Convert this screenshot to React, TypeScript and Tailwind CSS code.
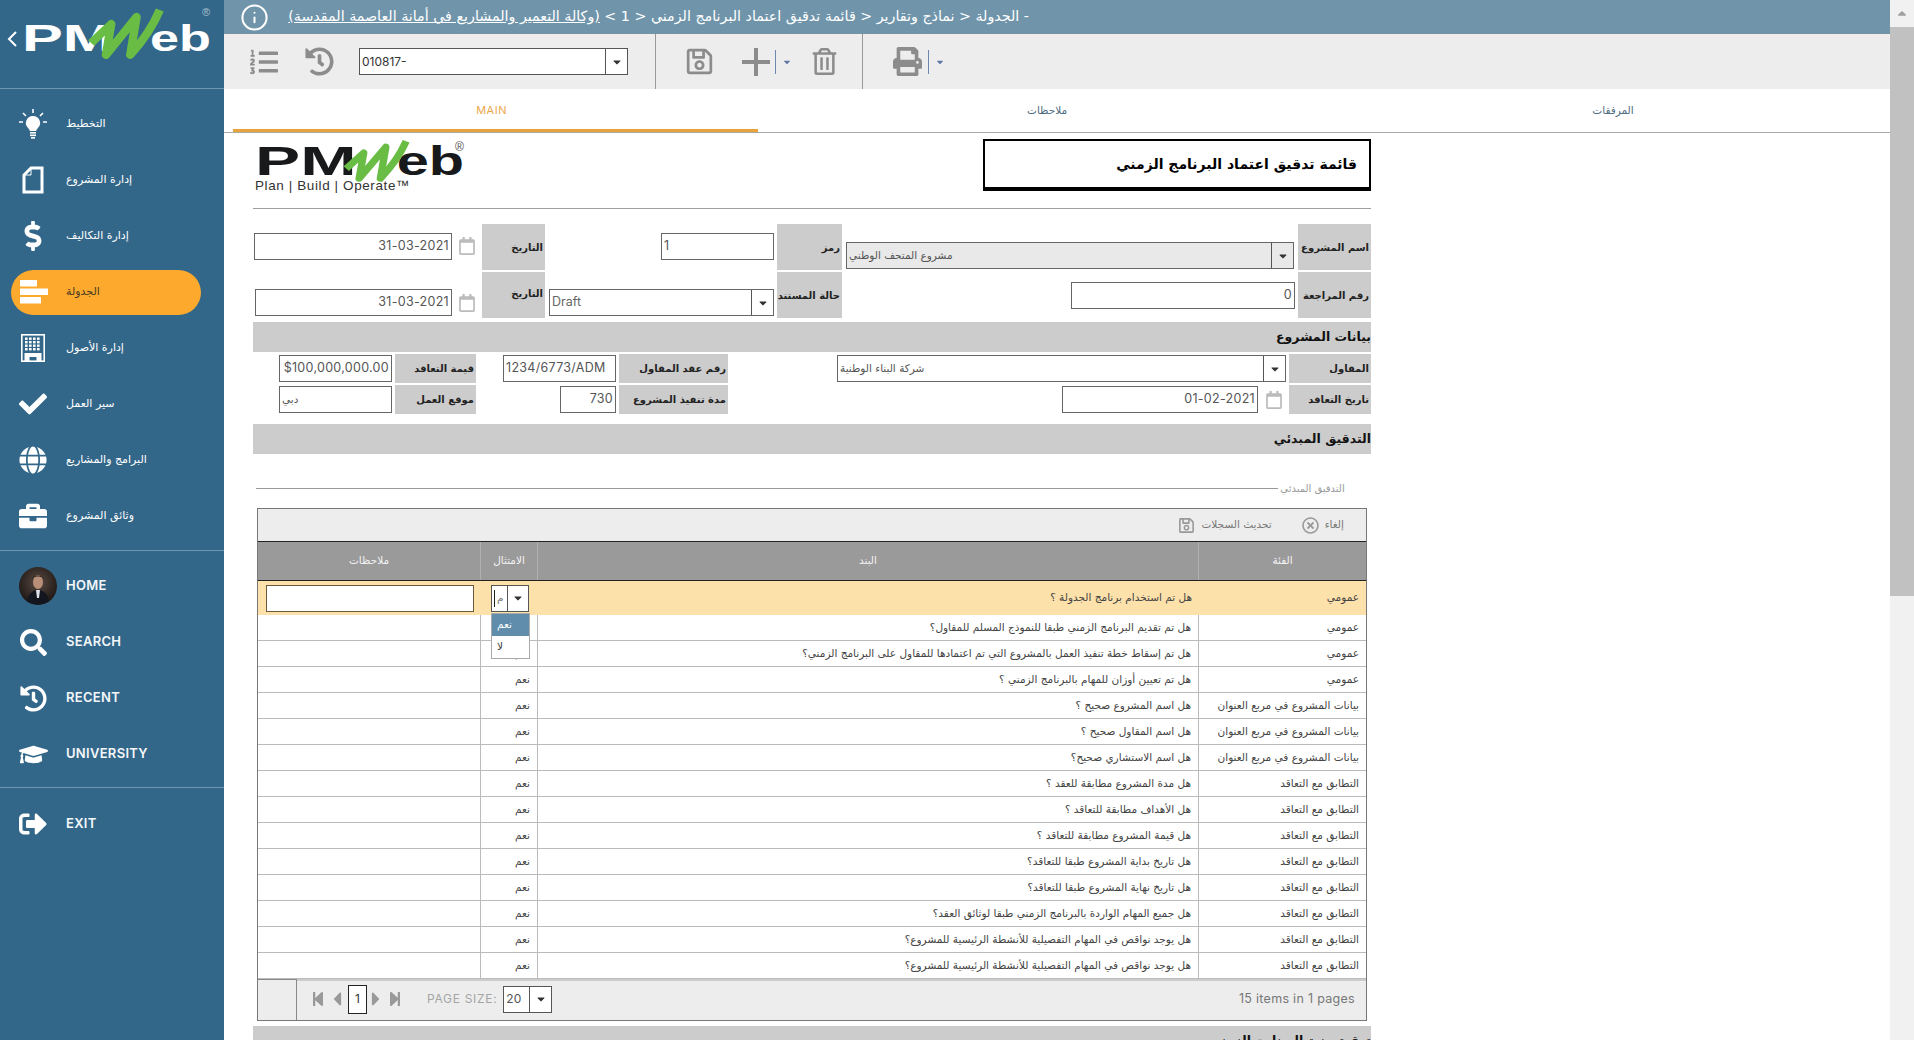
import React from 'react';
import { Info } from 'lucide-react';
import {
  FaDollarSign,
  FaCheck,
  FaGlobe,
  FaBriefcase,
  FaSearch,
  FaHistory,
  FaGraduationCap,
  FaSignOutAlt,
  FaListOl,
  FaRegSave,
  FaRegTrashAlt,
  FaPrint,
  FaRegCalendar,
  FaRegTimesCircle,
  FaStepBackward,
  FaStepForward,
  FaCaretLeft,
  FaCaretRight,
  FaCaretDown,
} from 'react-icons/fa';

const BulbIcon = () => (
  <svg width="30" height="32" viewBox="0 0 30 32" fill="white">
    <path d="M15 8a7 7 0 0 0-4.5 12.4c.8.8 1.2 1.6 1.3 2.6h6.4c.1-1 .5-1.8 1.3-2.6A7 7 0 0 0 15 8z" />
    <rect x="12" y="24" width="6" height="1.6" />
    <rect x="12" y="26.5" width="6" height="1.6" />
    <rect x="13" y="29" width="4" height="1.6" />
    <path d="M15 1v4M5 5l3 3M25 5l-3 3M1 14h4M25 14h4" stroke="white" strokeWidth="1.6" />
  </svg>
);

const FileIcon = () => (
  <svg width="22" height="28" viewBox="0 0 22 28" fill="none" stroke="white" strokeWidth="3">
    <path d="M9 2h11v24H2V9z" />
    <path d="M9 2v7H2" strokeWidth="1" />
  </svg>
);

const ScheduleIcon = () => (
  <svg width="30" height="26" viewBox="0 0 30 26" fill="white">
    <rect x="2" y="1" width="17" height="6.5" />
    <rect x="2" y="9.5" width="28" height="6.5" />
    <rect x="2" y="18" width="21" height="6.5" />
  </svg>
);

const windowRows = [3.5, 7, 10.5, 14];
const windowCols = [4, 8, 12, 16];

const BuildingIcon = () => (
  <svg width="24" height="28" viewBox="0 0 24 28" fill="white">
    <rect x="0.8" y="0.8" width="22.4" height="26.4" fill="none" stroke="white" strokeWidth="1.6" />
    {windowRows.map((y) =>
      windowCols.map((x) => <rect key={`${x}-${y}`} x={x} y={y} width="2.6" height="2.4" />),
    )}
    <path d="M3.5 19h17v8h-5v-4h-7v4h-5z" />
  </svg>
);

const Logo = ({ light }: { light?: boolean }) => {
  const textColor = light ? 'text-white' : 'text-[#17191a]';
  return (
    <div className="relative h-[36px] w-[189px]">
      <div className={`flex h-full items-center justify-between font-['Liberation_Sans',sans-serif] text-[36px] leading-none font-bold ${textColor}`}>
        <span className="origin-left scale-x-[1.7]">PM</span>
        <span className="origin-right scale-x-[1.45]">eb</span>
      </div>
      <svg
        className={`absolute ${light ? 'top-[-14px] left-[66px] h-[56px] w-[76px]' : 'top-[-3px] left-[80px] h-[42px] w-[60px]'}`}
        viewBox="0 0 72 56"
        fill="none"
        preserveAspectRatio="none"
      >
        <path
          d="M3 36 L22 17 L17 48 L46 10 L40 48 C52 34 62 18 68 3"
          stroke="#69bd45"
          strokeWidth="8"
          strokeLinejoin="round"
        />
      </svg>
      <span className={`absolute font-['Liberation_Sans',sans-serif] text-[11px] ${light ? 'top-[-17px] right-[1px] text-[#a9c0cf]' : 'top-[-4px] right-[0px] text-[#555]'}`}>®</span>
    </div>
  );
};

const Avatar = () => (
  <svg className="ml-[10px] shrink-0" width="38" height="38" viewBox="0 0 38 38">
    <defs>
      <radialGradient id="avbg" cx="50%" cy="40%" r="60%">
        <stop offset="0%" stopColor="#5b4a42" />
        <stop offset="100%" stopColor="#1c1613" />
      </radialGradient>
    </defs>
    <circle cx="19" cy="19" r="19" fill="url(#avbg)" />
    <ellipse cx="19" cy="15" rx="5" ry="7" fill="#b98f78" />
    <path d="M13 13c0-6 12-6 12 0l-1-2c-3-2-7-2-10 0z" fill="#2d2522" />
    <path d="M8 34c2-9 7-11 11-11s9 2 11 11a19 19 0 0 1-22 0z" fill="#14161f" />
    <path d="M17 23h4l-1 8h-2z" fill="#dfdfe6" />
  </svg>
);

const navTop = [
  { label: 'التخطيط', icon: <BulbIcon /> },
  { label: 'إدارة المشروع', icon: <FileIcon /> },
  { label: 'إدارة التكاليف', icon: <FaDollarSign size={30} color="white" /> },
  { label: 'الجدولة', icon: <ScheduleIcon />, active: true },
  { label: 'إدارة الأصول', icon: <BuildingIcon /> },
  { label: 'سير العمل', icon: <FaCheck size={28} color="white" /> },
  { label: 'البرامج والمشاريع', icon: <FaGlobe size={28} color="white" /> },
  { label: 'وثائق المشروع', icon: <FaBriefcase size={28} color="white" /> },
];

const navBottom = [
  { label: 'HOME', icon: <Avatar /> },
  { label: 'SEARCH', icon: <FaSearch size={27} color="white" /> },
  { label: 'RECENT', icon: <FaHistory size={27} color="white" /> },
  { label: 'UNIVERSITY', icon: <FaGraduationCap size={29} color="white" /> },
];

const NavItem = ({ label, icon, active, latin }: { label: string; icon: React.ReactNode; active?: boolean; latin?: boolean }) => (
  <div className="flex h-[56px] items-center">
    <div className={`mx-[11px] flex h-[45px] w-[190px] items-center rounded-full ${active ? 'bg-[#fca92e]' : ''}`}>
      <div className="flex w-[44px] justify-center">{icon}</div>
      {latin ? (
        <span className="ml-[11px] font-['Inter',sans-serif] text-[13px] font-semibold tracking-[0.3px] text-[#f4f7f9]">{label}</span>
      ) : (
        <span dir="rtl" className={`ml-[11px] font-['DejaVu_Sans',sans-serif] text-[11px] ${active ? 'text-[#4a3a20]' : 'text-white'}`}>{label}</span>
      )}
    </div>
  </div>
);

const Sidebar = () => (
  <div className="flex h-full w-[224px] shrink-0 flex-col bg-[#33678a]">
    <div className="flex h-[89px] shrink-0 items-center border-b border-[#6f96ae] pb-[10px] pl-[6px]">
      <svg width="12" height="20" viewBox="0 0 12 20" fill="none" stroke="white" strokeWidth="2">
        <path d="M10 3L3 10l7 7" />
      </svg>
      <div className="ml-[4px]">
        <Logo light />
      </div>
    </div>
    <div className="pt-[7px]">
      {navTop.map((item) => (
        <NavItem key={item.label} {...item} />
      ))}
    </div>
    <div className="mt-[6px] border-b border-[#6f96ae]" />
    <div className="pt-[7px]">
      {navBottom.map((item) => (
        <NavItem key={item.label} {...item} latin />
      ))}
    </div>
    <div className="mt-[5px] border-b border-[#6f96ae]" />
    <div className="pt-[8px]">
      <NavItem label="EXIT" icon={<FaSignOutAlt size={28} color="white" />} latin />
    </div>
  </div>
);

const TopBar = () => (
  <div className="flex h-[34px] shrink-0 items-center bg-[#7095ab] pl-[16px]">
    <Info size={29} color="white" strokeWidth={1.7} />
    <div dir="rtl" className="ml-[20px] w-[740px] font-['DejaVu_Sans',sans-serif] text-[14.25px] whitespace-nowrap text-white">
      {'- الجدولة < نماذج وتقارير < قائمة تدقيق اعتماد البرنامج الزمني < 1 > '}
      <span className="underline">(وكالة التعمير والمشاريع في أمانة العاصمة المقدسة)</span>
    </div>
  </div>
);

const DropArrow = ({ w = 'w-[22px]' }: { w?: string }) => (
  <span className={`flex h-full shrink-0 items-center justify-center border-l border-[#555] ${w}`}>
    <FaCaretDown size={12} color="#333" />
  </span>
);

const ToolDivider = () => <div className="h-full w-px bg-[#999]" />;
const SplitCaret = () => (
  <>
    <div className="h-[24px] w-px bg-[#6f86b0]" />
    <FaCaretDown size={10} color="#5d76a5" className="ml-[6px]" />
  </>
);

const Toolbar = () => (
  <div className="flex h-[55px] shrink-0 items-center bg-[linear-gradient(#f2ecea_3px,#ededed_3px)] pl-[26px]">
    <FaListOl size={28} color="#8c8c8c" />
    <FaHistory size={29} color="#8c8c8c" className="ml-[27px]" />
    <div className="ml-[25px] flex h-[27px] w-[269px] items-center border border-[#555] bg-white font-['Inter',sans-serif] text-[12px] text-[#333]">
      <span className="flex-1 pl-[2px]">010817-</span>
      <DropArrow />
    </div>
    <div className="ml-[27px] h-full">
      <ToolDivider />
    </div>
    <FaRegSave size={29} color="#8c8c8c" className="ml-[29px]" />
    <svg className="ml-[27px]" width="30" height="30" viewBox="0 0 30 30" fill="#8c8c8c">
      <rect x="13" y="1" width="4" height="28" />
      <rect x="1" y="13" width="28" height="4" />
    </svg>
    <div className="ml-[4px] flex items-center">
      <SplitCaret />
    </div>
    <FaRegTrashAlt size={27} color="#8c8c8c" className="ml-[19px]" />
    <div className="ml-[24px] h-full">
      <ToolDivider />
    </div>
    <FaPrint size={29} color="#8c8c8c" className="ml-[30px]" />
    <div className="ml-[6px] flex items-center">
      <SplitCaret />
    </div>
  </div>
);

const Tabs = () => (
  <div className="flex h-[44px] shrink-0 border-b border-[#aaa] pl-[9px] font-['DejaVu_Sans',sans-serif] text-[10.5px] text-[#4d6c80]">
    <div className="flex w-[527px] items-center justify-center border-b-[3px] border-[#e8a33d] pt-[3px] pr-[8px] font-['Inter',sans-serif] text-[11px] tracking-[0.5px] text-[#eba84c]">MAIN</div>
    <div dir="rtl" className="flex w-[580px] items-center justify-center">ملاحظات</div>
    <div dir="rtl" className="flex w-[556px] items-center justify-center">المرفقات</div>
  </div>
);

const Label = ({ w, text, top }: { w: string; text: string; top?: boolean }) => (
  <div dir="rtl" className={`flex h-full shrink-0 justify-start overflow-hidden bg-[#cccccc] pr-[2px] font-['DejaVu_Sans',sans-serif] text-[10px] font-bold whitespace-nowrap text-[#222] ${w} ${top ? 'items-start pt-[14px]' : 'items-center'}`}>
    {text}
  </div>
);

const TextBox = ({ w, children, align = 'right', cls = '', self = 'self-center' }: { w: string; children?: React.ReactNode; align?: 'left' | 'right'; cls?: string; self?: string }) => (
  <div className={`flex h-[27px] shrink-0 items-center border border-[#666] bg-white px-[2px] font-['Inter',sans-serif] text-[12.5px] tracking-[0.3px] text-[#555] ${align === 'right' ? 'justify-end' : 'justify-start'} ${self} ${w} ${cls}`}>
    {children}
  </div>
);

const Combo = ({ w, children, cls = '' }: { w: string; children: React.ReactNode; cls?: string }) => (
  <div className={`flex h-[27px] shrink-0 items-center border border-[#666] font-['Inter',sans-serif] text-[12.5px] text-[#666] ${w} ${cls}`}>
    <div className="flex-1 overflow-hidden pl-[2px] whitespace-nowrap">{children}</div>
    <DropArrow />
  </div>
);

const CalIcon = ({ w, cls = '' }: { w: string; cls?: string }) => (
  <div className={`flex shrink-0 items-center justify-center ${w} ${cls}`}>
    <FaRegCalendar size={18} color="#bbb" />
  </div>
);

const SectionBar = ({ text, cls = '' }: { text: string; cls?: string }) => (
  <div dir="rtl" className={`flex h-[30px] shrink-0 items-center bg-[#cccccc] font-['DejaVu_Sans',sans-serif] text-[12.5px] font-bold text-[#111] ${cls}`}>
    {text}
  </div>
);

const GENERAL = 'عمومي';
const TITLE = 'بيانات المشروع في مربع العنوان';
const CONTRACT = 'التطابق مع التعاقد';

const rows = [
  [GENERAL, 'هل تم استخدام برنامج الجدولة ؟'],
  [GENERAL, 'هل تم تقديم البرنامج الزمني طبقا للنموذج المسلم للمقاول؟'],
  [GENERAL, 'هل تم إسقاط خطة تنفيذ العمل بالمشروع التي تم اعتمادها للمقاول على البرنامج الزمني؟'],
  [GENERAL, 'هل تم تعيين أوزان للمهام بالبرنامج الزمني ؟'],
  [TITLE, 'هل اسم المشروع صحيح ؟'],
  [TITLE, 'هل اسم المقاول صحيح ؟'],
  [TITLE, 'هل اسم الاستشاري صحيح؟'],
  [CONTRACT, 'هل مدة المشروع مطابقة للعقد ؟'],
  [CONTRACT, 'هل الأهداف مطابقة للتعاقد ؟'],
  [CONTRACT, 'هل قيمة المشروع مطابقة للتعاقد ؟'],
  [CONTRACT, 'هل تاريخ بداية المشروع طبقا للتعاقد؟'],
  [CONTRACT, 'هل تاريخ نهاية المشروع طبقا للتعاقد؟'],
  [CONTRACT, 'هل جميع المهام الواردة بالبرنامج الزمني طبقا لوثائق العقد؟'],
  [CONTRACT, 'هل يوجد نواقص في المهام التفصيلية للأنشطة الرئيسية للمشروع؟'],
  [CONTRACT, 'هل يوجد نواقص في المهام التفصيلية للأنشطة الرئيسية للمشروع؟'],
];

const EditRow = ({ category, item }: { category: string; item: string }) => (
  <div className="flex h-[34px] bg-[#fde1ab] text-[#444]">
    <div className="flex w-[223px] items-center pl-[8px]">
      <div className="h-[27px] w-[208px] border border-[#6b5a3c] bg-white" />
    </div>
    <div className="relative flex w-[57px] items-center pl-[10px]">
      <div className="flex h-[27px] w-[38px] items-center border border-[#555] bg-white">
        <span className="flex h-full w-[15px] items-center overflow-hidden pl-[2px]">
          <span className="h-[17px] w-px shrink-0 bg-[#222]" />
          <span dir="rtl" className="ml-[2px] text-[#777]">م</span>
        </span>
        <DropArrow w="w-[21px]" />
      </div>
      {/* open dropdown */}
      <div className="absolute top-[32px] left-[10px] z-10 w-[39px] border border-[#aaa] bg-white text-[10.5px]">
        <div dir="rtl" className="flex h-[22px] items-center justify-end bg-[#5f8dab] pl-[5px] text-white">نعم</div>
        <div dir="rtl" className="flex h-[22px] items-center justify-end pl-[5px] text-[#444]">لا</div>
      </div>
    </div>
    <div dir="rtl" className="flex w-[661px] items-center pr-[7px]">{item}</div>
    <div dir="rtl" className="flex w-[167px] items-center pr-[7px]">{category}</div>
  </div>
);

const GridRow = ({ category, item }: { category: string; item: string }) => (
  <div className="flex h-[26px] border-b border-[#bbb] text-[#444]">
    <div className="w-[223px] border-r border-[#bbb]" />
    <div dir="rtl" className="flex w-[57px] items-center border-r border-[#bbb] pr-[7px]">نعم</div>
    <div dir="rtl" className="flex w-[661px] items-center border-r border-[#bbb] pr-[7px]">{item}</div>
    <div dir="rtl" className="flex w-[167px] items-center pr-[7px]">{category}</div>
  </div>
);

const HeaderCell = ({ w, text, border = true }: { w: string; text: string; border?: boolean }) => (
  <div dir="rtl" className={`flex items-center justify-center text-[#f2f2f2] ${w} ${border ? 'border-r border-[#b0b0b0]' : ''}`}>{text}</div>
);

const ChecklistGrid = () => (
  <div className="ml-[4px] w-[1110px] border border-[#777] font-['DejaVu_Sans',sans-serif] text-[10.5px]">
    <div dir="rtl" className="flex h-[32px] items-center bg-[#ededed] pr-[22px] text-[#777]">
      <span>إلغاء</span>
      <FaRegTimesCircle size={17} color="#999" className="mr-[6px]" />
      <span className="mr-[30px]">تحديث السجلات</span>
      <FaRegSave size={17} color="#999" className="mr-[6px]" />
    </div>
    <div className="flex h-[40px] border-y border-[#222] bg-[#9a9a9a]">
      <HeaderCell w="w-[223px]" text="ملاحظات" />
      <HeaderCell w="w-[57px]" text="الامتثال" />
      <HeaderCell w="w-[661px]" text="البند" />
      <HeaderCell w="w-[167px]" text="الفئة" border={false} />
    </div>
    <EditRow category={rows[0][0]} item={rows[0][1]} />
    {rows.slice(1).map((row, i) => (
      <GridRow key={i} category={row[0]} item={row[1]} />
    ))}
    <div className="flex h-[41px] bg-[#ededed] font-['Inter',sans-serif] text-[#888]">
      <div className="w-[39px] border-t border-r border-[#888]" />
      <div className="flex flex-1 items-center border-t-2 border-[#ccc] pb-[3px] pl-[13px]">
        <FaStepBackward size={16} color="#999" />
        <FaCaretLeft size={22} color="#999" />
        <div className="flex h-[29px] w-[19px] items-center justify-center border border-[#222] bg-white text-[12px] text-[#333]">1</div>
        <FaCaretRight size={22} color="#999" className="-ml-[2px]" />
        <FaStepForward size={16} color="#999" />
        <span className="ml-[24px] text-[12px] tracking-[0.7px] text-[#a5a5a5]">PAGE SIZE:</span>
        <div className="ml-[6px] flex h-[27px] w-[49px] items-center border border-[#555] bg-white text-[12px] text-[#555]">
          <span className="flex-1 pl-[2px]">20</span>
          <DropArrow />
        </div>
        <span className="ml-auto pr-[11px] text-[12.5px] tracking-[0.3px] text-[#777]">15 items in 1 pages</span>
      </div>
    </div>
  </div>
);

const Form = () => (
  <div className="w-[1118px]">
    {/* logo + title */}
    <div className="flex h-[76px] items-start border-b border-[#a0a0a0]">
      <div className="ml-[2px] pt-[9px]">
        <div className="h-[40px] w-[209px]">
          <div className="origin-top-left scale-[1.106]">
            <Logo />
          </div>
        </div>
        <div className="mt-[-6px] font-['Liberation_Sans',sans-serif] text-[13.5px] tracking-[0.6px] text-[#333]">Plan | Build | Operate™</div>
      </div>
      <div dir="rtl" className="mt-[6px] ml-auto flex h-[52px] w-[388px] items-center border-2 border-b-4 border-black pr-[12px] font-['DejaVu_Sans',sans-serif] text-[14px] font-bold text-black">
        قائمة تدقيق اعتماد البرنامج الزمني
      </div>
    </div>

    <div className="mt-[15px] flex h-[46px]">
      <TextBox w="w-[198px]" cls="mb-[2px] ml-[1px]">31-03-2021</TextBox>
      <CalIcon w="w-[30px]" cls="pb-[2px]" />
      <Label w="w-[63px]" text="التاريخ" />
      <div className="w-[116px]" />
      <TextBox w="w-[113px]" align="left" cls="mb-[2px]">1</TextBox>
      <Label w="ml-[3px] w-[65px]" text="رمز" />
      <Combo w="w-[448px]" cls="mt-[18px] ml-[4px] bg-[#e9e9e9]">
        <span dir="rtl" className="font-['DejaVu_Sans',sans-serif] text-[10.5px] text-[#555]">مشروع المتحف الوطني</span>
      </Combo>
      <Label w="ml-[4px] w-[73px]" text="اسم المشروع" />
    </div>

    <div className="mt-[2px] flex h-[46px]">
      <TextBox w="w-[197px]" cls="ml-[2px] mb-[2px]" self="self-end">31-03-2021</TextBox>
      <CalIcon w="w-[30px]" cls="self-end pb-[6px]" />
      <Label w="w-[63px]" text="التاريخ" top />
      <div className="ml-[4px] flex items-end pb-[2px]">
        <Combo w="w-[225px]">Draft</Combo>
      </div>
      <Label w="ml-[3px] w-[65px]" text="حالة المستند" />
      <div className="w-[229px]" />
      <TextBox w="w-[224px]">0</TextBox>
      <Label w="ml-[3px] w-[73px]" text="رقم المراجعة" />
    </div>

    <SectionBar text="بيانات المشروع" cls="mt-[4px]" />

    <div className="mt-[2px] flex h-[29px]">
      <TextBox w="w-[113px]" cls="ml-[26px]">$100,000,000.00</TextBox>
      <Label w="ml-[3px] w-[81px]" text="قيمة التعاقد" />
      <TextBox w="w-[113px]" cls="ml-[27px]" align="left">1234/6773/ADM</TextBox>
      <Label w="ml-[3px] w-[109px]" text="رقم عقد المقاول" />
      <div className="ml-[109px] flex items-center">
        <Combo w="w-[449px]">
          <span dir="rtl" className="font-['DejaVu_Sans',sans-serif] text-[10.5px] text-[#555]">شركة البناء الوطنية</span>
        </Combo>
      </div>
      <Label w="ml-[3px] w-[82px]" text="المقاول" />
    </div>

    <div className="mt-[2px] flex h-[29px]">
      <TextBox w="w-[113px]" cls="ml-[26px]" align="left">
        <span className="font-['DejaVu_Sans',sans-serif] text-[10.5px]">دبي</span>
      </TextBox>
      <Label w="ml-[3px] w-[81px]" text="موقع العمل" />
      <TextBox w="w-[56px]" cls="ml-[84px]">730</TextBox>
      <Label w="ml-[3px] w-[109px]" text="مدة تنفيذ المشروع" />
      <div className="w-[334px]" />
      <TextBox w="w-[196px]">01-02-2021</TextBox>
      <CalIcon w="w-[31px]" />
      <Label w="w-[82px]" text="تاريخ التعاقد" />
    </div>

    <SectionBar text="التدقيق المبدئي" cls="mt-[10px]" />

    {/* fieldset legend */}
    <div className="mt-[27px] mb-[13px] flex h-[14px] items-center pr-[26px] pl-[3px]">
      <div className="h-px flex-1 bg-[#999]" />
      <span dir="rtl" className="ml-[2px] w-[65px] text-center font-['DejaVu_Sans',sans-serif] text-[10px] whitespace-nowrap text-[#999]">التدقيق المبدئي</span>
    </div>

    <ChecklistGrid />

    <SectionBar text="تدقيق بنية البرنامج الزمني" cls="mt-[5px]" />
  </div>
);

const Scrollbar = () => (
  <div className="flex h-full w-[24px] shrink-0 flex-col items-center bg-[#f1f1f1]">
    <FaCaretDown size={14} color="#a0a0a0" className="mt-[7px] rotate-180" />
    <div className="mt-[6px] h-[569px] w-full bg-[#c1c1c1]" />
  </div>
);

const App = () => (
  <div className="flex h-[1040px] w-[1914px] overflow-hidden bg-white">
    <Sidebar />
    <div className="flex w-[1666px] flex-col overflow-hidden">
      <TopBar />
      <Toolbar />
      <Tabs />
      <div className="flex-1 overflow-hidden pl-[29px]">
        <Form />
      </div>
    </div>
    <Scrollbar />
  </div>
);

export default App;
